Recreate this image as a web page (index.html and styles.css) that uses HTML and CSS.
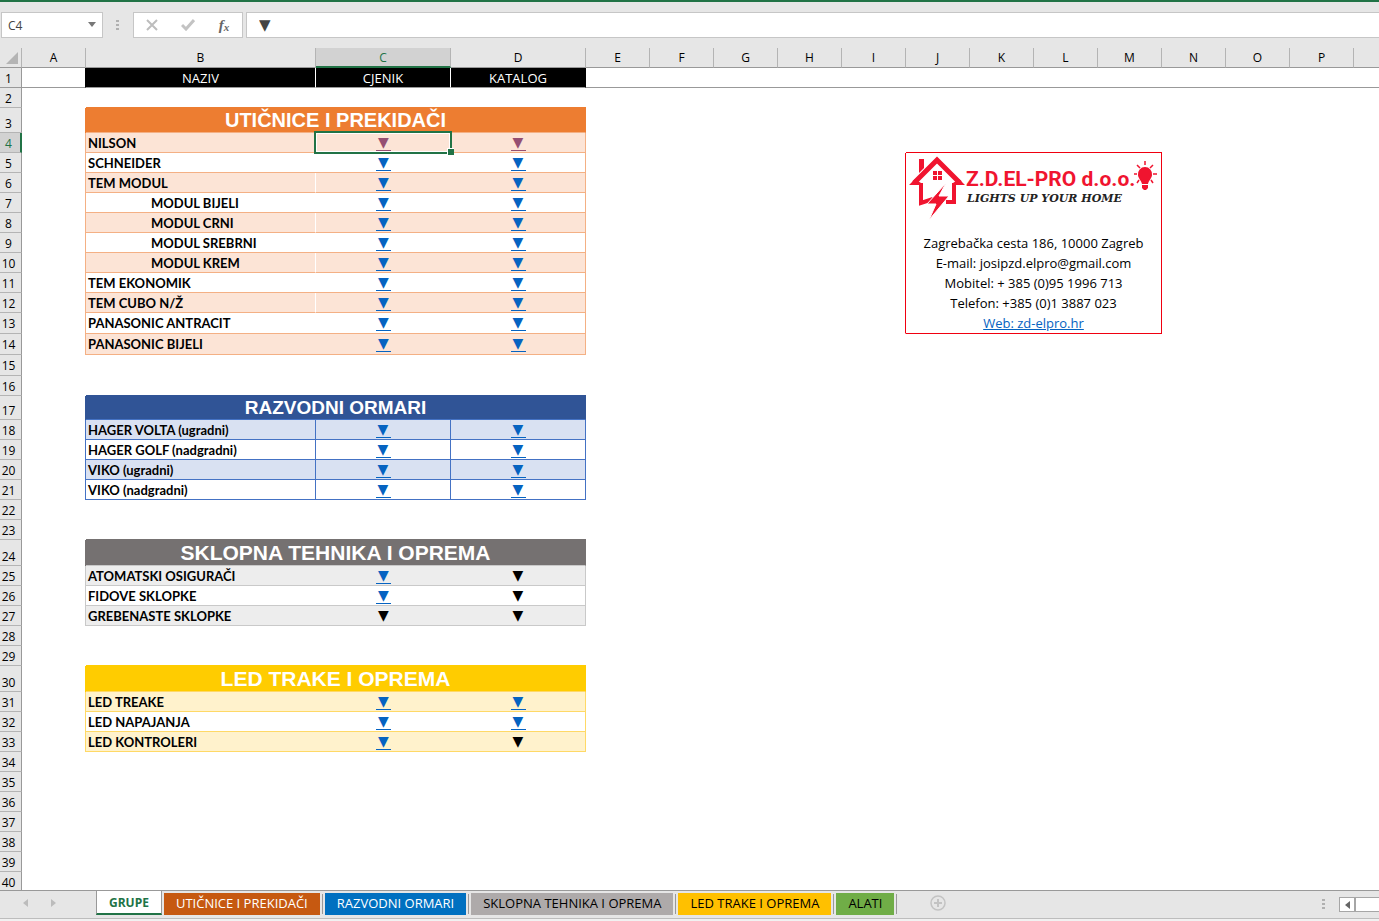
FILE: index.html
```html
<!DOCTYPE html>
<html lang="hr">
<head>
<meta charset="utf-8">
<title>GRUPE</title>
<link rel="stylesheet" href="styles.css">
</head>
<body>
<header class="formula-bar">
  <div class="name-box">
    <input type="text" value="C4" aria-label="Name box">
    <button type="button" aria-label="Open name list"><svg width="8" height="5" viewBox="0 0 8 5"><path d="M0 0h8L4 5z" fill="#777"/></svg></button>
  </div>
  <span class="grip"></span>
  <div class="actions">
    <button type="button" aria-label="Cancel"><svg width="14" height="12" viewBox="0 0 14 12"><path d="M2 1l10 10M12 1L2 11" stroke="#bdbdbd" stroke-width="2" fill="none"/></svg></button>
    <button type="button" aria-label="Enter"><svg width="14" height="12" viewBox="0 0 14 12"><path d="M1 6l4 4 8-9" stroke="#c3c3c3" stroke-width="3" fill="none"/></svg></button>
    <button type="button" class="fx" aria-label="Insert function">f<small>x</small></button>
  </div>
  <input class="formula" type="text" value="▼" aria-label="Formula">
</header>

<main class="sheet">
<table>
  <colgroup><col class="w-head"><col class="w-std"><col class="w-name"><col class="w-link"><col class="w-link"><col class="w-std"><col class="w-std"><col class="w-std"><col class="w-std"><col class="w-std"><col class="w-std"><col class="w-std"><col class="w-std"><col class="w-std"><col class="w-std"><col class="w-std"><col class="w-std"><col></colgroup>
  <thead>
    <tr><th class="corner"><svg width="12" height="12" viewBox="0 0 12 12"><path d="M12 0v12H0z" fill="#b4b4b4"/></svg></th><th>A</th><th>B</th><th class="current">C</th><th>D</th><th>E</th><th>F</th><th>G</th><th>H</th><th>I</th><th>J</th><th>K</th><th>L</th><th>M</th><th>N</th><th>O</th><th>P</th><th class="last"></th></tr>
  </thead>
  <tbody>
    <tr class="frozen"><th>1</th><td class="edge"></td><td class="label">NAZIV</td><td class="label">CJENIK</td><td class="label">KATALOG</td><td colspan="13" class="last"></td></tr>
    <tr><th>2</th><td></td><td colspan="3" class="over-orange"></td><td colspan="13"></td></tr>
    <tr class="orange h25"><th>3</th><td class="edge"></td><td colspan="3" class="title">UTIČNICE I PREKIDAČI</td><td colspan="13"></td></tr>
    <tr class="orange band"><th class="current">4</th><td class="edge"></td><td class="name">NILSON</td><td class="selected"><a class="visited" href="#c4">▼</a></td><td><a class="visited" href="#d4">▼</a></td><td colspan="5"></td><td colspan="4" class="over-info"></td><td colspan="4"></td></tr>
    <tr class="orange"><th>5</th><td class="edge"></td><td class="name">SCHNEIDER</td><td><a href="#c5">▼</a></td><td><a href="#d5">▼</a></td><td colspan="5" rowspan="9" class="before-info"></td>
      <td colspan="4" rowspan="9" class="info">
        <svg class="logo" viewBox="0 0 255 80" role="img" aria-label="Z.D.EL-PRO d.o.o.">
          <path d="M13 6h5v9l-5 5z" fill="#f0142f"/>
          <path d="M8 30L31 7l23 23" fill="none" stroke="#f0142f" stroke-width="5"/>
          <path d="M3 32l6-6 6 4v2zM59 32l-6-6-6 4v2z" fill="#f0142f"/>
          <path d="M15 30v20l12-4M48 30v19h-8" fill="none" stroke="#f0142f" stroke-width="4"/>
          <path d="M40 30L21 51h9L23 67l20-24H33z" fill="#f0142f" stroke="#fff" stroke-width="1"/>
          <path d="M27 18h4v4h-4zM32 18h4v4h-4zM27 23h4v4h-4zM32 23h4v4h-4z" fill="#f0142f"/>
          <text class="brand" x="60" y="33">Z.D.EL-PRO d.o.o.</text>
          <text class="tagline" x="61" y="49">LIGHTS UP YOUR HOME</text>
          <path d="M239 14a7 7 0 0 1 7 8c0 3-3 5-4 9h-6c-1-4-4-6-4-9a7 7 0 0 1 7-8zM236 32h6v3l-2 2h-2l-2-2z" fill="#f0142f"/>
          <path d="M239 8v4M231 12l3 3M247 12l-3 3M228 21h3M251 21h-4M231 30l2-3M247 30l-2-3" stroke="#f0142f" stroke-width="1.5"/>
        </svg>
        <p>Zagrebačka cesta 186, 10000 Zagreb</p>
        <p>E-mail: josipzd.elpro@gmail.com</p>
        <p>Mobitel: + 385 (0)95 1996 713</p>
        <p>Telefon: +385 (0)1 3887 023</p>
        <p><a href="#web">Web: zd-elpro.hr</a></p>
      </td><td colspan="4" rowspan="9"></td></tr>
    <tr class="orange band split"><th>6</th><td class="edge"></td><td class="name">TEM MODUL</td><td><a href="#c6">▼</a></td><td><a href="#d6">▼</a></td></tr>
    <tr class="orange"><th>7</th><td class="edge"></td><td class="name sub">MODUL BIJELI</td><td><a href="#c7">▼</a></td><td><a href="#d7">▼</a></td></tr>
    <tr class="orange band split"><th>8</th><td class="edge"></td><td class="name sub">MODUL CRNI</td><td><a href="#c8">▼</a></td><td><a href="#d8">▼</a></td></tr>
    <tr class="orange"><th>9</th><td class="edge"></td><td class="name sub">MODUL SREBRNI</td><td><a href="#c9">▼</a></td><td><a href="#d9">▼</a></td></tr>
    <tr class="orange band split"><th>10</th><td class="edge"></td><td class="name sub">MODUL KREM</td><td><a href="#c10">▼</a></td><td><a href="#d10">▼</a></td></tr>
    <tr class="orange"><th>11</th><td class="edge"></td><td class="name">TEM EKONOMIK</td><td><a href="#c11">▼</a></td><td><a href="#d11">▼</a></td></tr>
    <tr class="orange band split"><th>12</th><td class="edge"></td><td class="name">TEM CUBO N/Ž</td><td><a href="#c12">▼</a></td><td><a href="#d12">▼</a></td></tr>
    <tr class="orange h21"><th>13</th><td class="edge"></td><td class="name">PANASONIC ANTRACIT</td><td><a href="#c13">▼</a></td><td><a href="#d13">▼</a></td></tr>
    <tr class="orange band h21"><th>14</th><td class="edge"></td><td class="name">PANASONIC BIJELI</td><td><a href="#c14">▼</a></td><td><a href="#d14">▼</a></td><td colspan="13"></td></tr>
    <tr class="h21"><th>15</th><td colspan="17"></td></tr>
    <tr><th>16</th><td></td><td colspan="3" class="over-blue"></td><td colspan="13"></td></tr>
    <tr class="blue h24"><th>17</th><td class="edge"></td><td colspan="3" class="title">RAZVODNI ORMARI</td><td colspan="13"></td></tr>
    <tr class="blue band"><th>18</th><td class="edge"></td><td class="name">HAGER VOLTA (ugradni)</td><td><a href="#c18">▼</a></td><td><a href="#d18">▼</a></td><td colspan="13"></td></tr>
    <tr class="blue"><th>19</th><td class="edge"></td><td class="name">HAGER GOLF (nadgradni)</td><td><a href="#c19">▼</a></td><td><a href="#d19">▼</a></td><td colspan="13"></td></tr>
    <tr class="blue band"><th>20</th><td class="edge"></td><td class="name">VIKO (ugradni)</td><td><a href="#c20">▼</a></td><td><a href="#d20">▼</a></td><td colspan="13"></td></tr>
    <tr class="blue"><th>21</th><td class="edge"></td><td class="name">VIKO (nadgradni)</td><td><a href="#c21">▼</a></td><td><a href="#d21">▼</a></td><td colspan="13"></td></tr>
    <tr><th>22</th><td colspan="17"></td></tr>
    <tr><th>23</th><td></td><td colspan="3" class="over-gray"></td><td colspan="13"></td></tr>
    <tr class="gray h26"><th>24</th><td class="edge"></td><td colspan="3" class="title">SKLOPNA TEHNIKA I OPREMA</td><td colspan="13"></td></tr>
    <tr class="gray band"><th>25</th><td class="edge"></td><td class="name">ATOMATSKI OSIGURAČI</td><td><a href="#c25">▼</a></td><td><span class="mark">▼</span></td><td colspan="13"></td></tr>
    <tr class="gray"><th>26</th><td class="edge"></td><td class="name">FIDOVE SKLOPKE</td><td><a href="#c26">▼</a></td><td><span class="mark">▼</span></td><td colspan="13"></td></tr>
    <tr class="gray band"><th>27</th><td class="edge"></td><td class="name">GREBENASTE SKLOPKE</td><td><span class="mark">▼</span></td><td><span class="mark">▼</span></td><td colspan="13"></td></tr>
    <tr><th>28</th><td colspan="17"></td></tr>
    <tr><th>29</th><td></td><td colspan="3" class="over-yellow"></td><td colspan="13"></td></tr>
    <tr class="yellow h26"><th>30</th><td class="edge"></td><td colspan="3" class="title">LED TRAKE I OPREMA</td><td colspan="13"></td></tr>
    <tr class="yellow band"><th>31</th><td class="edge"></td><td class="name">LED TREAKE</td><td><a href="#c31">▼</a></td><td><a href="#d31">▼</a></td><td colspan="13"></td></tr>
    <tr class="yellow"><th>32</th><td class="edge"></td><td class="name">LED NAPAJANJA</td><td><a href="#c32">▼</a></td><td><a href="#d32">▼</a></td><td colspan="13"></td></tr>
    <tr class="yellow band"><th>33</th><td class="edge"></td><td class="name">LED KONTROLERI</td><td><a href="#c33">▼</a></td><td><span class="mark">▼</span></td><td colspan="13"></td></tr>
    <tr><th>34</th><td colspan="17"></td></tr>
    <tr><th>35</th><td colspan="17"></td></tr>
    <tr><th>36</th><td colspan="17"></td></tr>
    <tr><th>37</th><td colspan="17"></td></tr>
    <tr><th>38</th><td colspan="17"></td></tr>
    <tr><th>39</th><td colspan="17"></td></tr>
    <tr><th>40</th><td colspan="17"></td></tr>
  </tbody>
</table>
</main>

<footer class="tab-bar">
  <div class="tab-nav">
    <button type="button" aria-label="Previous sheets"><svg width="5" height="8" viewBox="0 0 5 8"><path d="M5 0v8L0 4z" fill="#bcbcbc"/></svg></button>
    <button type="button" aria-label="Next sheets"><svg width="5" height="8" viewBox="0 0 5 8"><path d="M0 0v8l5-4z" fill="#bcbcbc"/></svg></button>
  </div>
  <nav class="tabs">
    <button type="button" class="tab active">GRUPE</button>
    <button type="button" class="tab t-orange">UTIČNICE I PREKIDAČI</button>
    <button type="button" class="tab t-blue">RAZVODNI ORMARI</button>
    <button type="button" class="tab t-gray">SKLOPNA TEHNIKA I OPREMA</button>
    <button type="button" class="tab t-yellow">LED TRAKE I OPREMA</button>
    <button type="button" class="tab t-green">ALATI</button>
  </nav>
  <button type="button" class="add" aria-label="New sheet"><svg width="16" height="16" viewBox="0 0 16 16"><circle cx="8" cy="8" r="7" fill="none" stroke="#c3c3c3" stroke-width="1.5"/><path d="M8 4v8M4 8h8" stroke="#c3c3c3" stroke-width="2"/></svg></button>
  <span class="grip"></span>
  <div class="scroller"><button type="button" aria-label="Scroll left"><svg width="5" height="8" viewBox="0 0 5 8"><path d="M5 0v8L0 4z" fill="#666"/></svg></button><span class="thumb"></span></div>
</footer>
</body>
</html>
```
FILE: styles.css
```css
* { box-sizing: border-box; }

body {
  margin: 0;
  height: 100vh;
  display: flex;
  flex-direction: column;
  overflow: hidden;
  background: #e6e6e6;
  color: #000;
  font: 13px/18px "Open Sans", "Noto Sans", sans-serif;
}

button, input {
  margin: 0;
  padding: 0;
  border: 0;
  background: none;
  color: inherit;
  font: inherit;
}

button { display: flex; align-items: center; justify-content: center; }

/* Formula bar */
.formula-bar {
  flex: none;
  display: flex;
  height: 48px;
  padding: 10px 0 10px 1px;
  border-top: 2px solid #217346;
}

.name-box, .actions, .formula {
  height: 26px;
  border: 1px solid #c6c6c6;
  background: #fff;
}

.name-box { display: flex; width: 102px; }
.name-box input { flex: 1; min-width: 0; padding: 2px 0 0 6px; color: #444; font-size: 12px; }
.name-box button { width: 20px; padding-bottom: 2px; }

.grip {
  width: 3px;
  height: 11px;
  margin: 8px 14px 0 13px;
  background: repeating-linear-gradient(#b0b0b0 0 2px, transparent 2px 4px);
}

.actions { display: flex; width: 110px; }
.actions button { flex: 1; }
.actions .fx { color: #666; font: italic bold 15px/18px "Liberation Serif", serif; }
.fx small { padding-top: 4px; font-size: 11px; }

.formula {
  flex: 1;
  min-width: 0;
  margin-left: 3px;
  padding-left: 12px;
  border-right: 0;
  color: #444;
  font: 15px/18px "DejaVu Sans", sans-serif;
}

/* Grid */
.sheet { flex: 1; min-height: 0; overflow: hidden; background: #fff; }

table { width: 100%; table-layout: fixed; border-collapse: separate; border-spacing: 0; }
.w-head { width: 22px; }
.w-std { width: 64px; }
.w-name { width: 230px; }
.w-link { width: 135px; }

tr { height: 20px; }
.h21 { height: 21px; }
.h24 { height: 24px; }
.h25 { height: 25px; }
.h26 { height: 26px; }

th, td {
  padding: 0;
  border: 0 solid transparent;
  border-width: 0 1px 1px 0;
  font-weight: 400;
  line-height: 18px;
  text-align: center;
  vertical-align: bottom;
  white-space: nowrap;
}
.h21 > * { padding-bottom: 1px; }

th { background: #e6e6e6; font-size: 12px; }
thead th { border-right-color: #b4b4b4; border-bottom-color: #999; }
tbody th { border-right-color: #999; border-bottom-color: #b4b4b4; padding-right: 4px; line-height: 16px; }
.corner svg { display: block; margin: 0 0 3px 6px; }
thead .current { background: #d2d2d2; border-bottom: 2px solid #217346; color: #217346; line-height: 17px; }
tbody .current { background: #d2d2d2; border-right: 2px solid #217346; color: #217346; padding-right: 3px; }
.last { border-right-width: 0; }

.frozen th, .frozen td { border-bottom-color: #999; }
.frozen .label { background: #000; border-right-color: #fff; color: #fff; line-height: 17px; }
.frozen .edge, .frozen .label:nth-child(5) { border-right-color: #000; }

.title {
  color: #fff;
  font: bold 20px/22px "Liberation Sans", Arial, sans-serif;
  vertical-align: middle;
}
.blue .title { font-size: 19px; }
.gray .title, .yellow .title { font-size: 21px; }

.name { padding-left: 2px; font: bold 13px/18px Lato, sans-serif; text-align: left; }
.sub { padding-left: 65px; }

td > a, .mark {
  display: block;
  width: 15px;
  height: 16px;
  margin: 0 auto 1px;
  border-bottom: 1px solid #0563c1;
  color: #0563c1;
  font: 14px/15px "DejaVu Sans", sans-serif;
  text-align: center;
  text-decoration: none;
}
td > .visited { border-color: #954f72; color: #954f72; }
.mark { border-color: transparent; color: #000; }

.over-orange { border-bottom-color: #ed7d31; }
.over-blue { border-bottom-color: #305496; }
.over-gray { border-bottom-color: #757171; }
.over-yellow { border-bottom-color: #ffcc00; }
[class^="over-"] { border-right-width: 0; }

/* Tables without inner column lines */
.orange .name, .orange .name + td,
.gray .name, .gray .name + td,
.yellow .name, .yellow .name + td { border-right-width: 0; }

.orange .edge, .orange .name ~ td:nth-child(5) { border-right-color: #f4b084; }
.orange .name, .orange .name ~ td:nth-child(-n+5), .orange .title { border-bottom-color: #f4b084; }
.orange.band .name, .orange.band .name ~ td:nth-child(-n+5) { background: #fce4d6; }
.orange.split .name { border-right: 1px solid #fff; }
.orange .title { background: #ed7d31; border-right-color: #ed7d31; }

.blue .edge, .blue .name, .blue .name ~ td:nth-child(-n+5) { border-right-color: #4472c4; }
.blue .name, .blue .name ~ td:nth-child(-n+5), .blue .title { border-bottom-color: #4472c4; }
.blue.band .name, .blue.band .name ~ td:nth-child(-n+5) { background: #d9e1f2; }
.blue .title { background: #305496; border-right-color: #305496; }

.gray .edge, .gray .name ~ td:nth-child(5) { border-right-color: #c9c9c9; }
.gray .name, .gray .name ~ td:nth-child(-n+5), .gray .title { border-bottom-color: #c9c9c9; }
.gray.band .name, .gray.band .name ~ td:nth-child(-n+5) { background: #ededed; }
.gray .title { background: #757171; border-right-color: #757171; }

.yellow .edge, .yellow .name ~ td:nth-child(5) { border-right-color: #ffd966; }
.yellow .name, .yellow .name ~ td:nth-child(-n+5), .yellow .title { border-bottom-color: #ffd966; }
.yellow.band .name, .yellow.band .name ~ td:nth-child(-n+5) { background: #fff2cc; }
.yellow .title { background: #ffcc00; border-right-color: #ffcc00; }

/* Edge cells meet the coloured block with no gap at the corner */
.edge { border-bottom-width: 0; }
.frozen .edge { border-bottom-width: 1px; }
.orange.h25 .edge { border-right-color: #ed7d31; }
.blue.h24 .edge { border-right-color: #305496; }
.gray.h26 .edge { border-right-color: #757171; }
.yellow.h26 .edge { border-right-color: #ffcc00; }

/* Cell selection frame and its fill handle */
.selected { position: relative; }
.selected::before {
  content: "";
  position: absolute;
  inset: -2px -1px -2px -2px;
  border: 2px solid #217346;
  box-shadow: inset 0 0 0 1px #fff;
}
.selected::after {
  content: "";
  position: absolute;
  right: -3px;
  bottom: -3px;
  width: 6px;
  height: 6px;
  border: 1px solid #fff;
  border-width: 1px 0 0 1px;
  background: #217346;
}

/* Company card */
.orange .over-info { border-bottom-color: #f00010; }
.before-info { border-right-color: #f00010; }
.orange .info { border-right-color: #f00010; border-bottom-color: #f00010; }
.info { font: 13px/20px "Open Sans", "Noto Sans", sans-serif; vertical-align: top; }
.info p { margin: 0; line-height: 20px; }
.info p a { color: #0563c1; }
.logo { display: block; width: 100%; height: 80px; }
.brand { fill: #f0142f; font: bold 21px Roboto, "Liberation Sans", sans-serif; }
.tagline { fill: #222; font: italic bold 11px "DejaVu Serif", serif; }

/* Sheet tabs */
.tab-bar {
  flex: none;
  display: flex;
  height: 31px;
  padding-bottom: 2px;
  border-top: 1px solid #999;
  border-bottom: 2px solid #f1f1f1;
  box-shadow: inset 0 -1px #bdbdbd;
}
.tab-nav { display: flex; gap: 23px; width: 96px; padding: 0 0 3px 23px; }
.tabs { display: flex; align-items: flex-start; }
.tab {
  position: relative;
  height: 22px;
  margin: 2px 5px 0 0;
  padding: 0 12px 2px;
  white-space: nowrap;
}
.tab:not(.active)::after {
  content: "";
  position: absolute;
  top: 1px;
  right: -3px;
  width: 1px;
  height: 20px;
  background: #999;
}
.active {
  height: 24px;
  margin: 0 2px 0 0;
  padding: 2px 12px 0;
  border: 1px solid #999;
  border-width: 0 1px;
  border-bottom: 2px solid #217346;
  background: #fff;
  color: #217346;
  font-size: 12px;
  font-weight: 700;
}
.t-orange { background: #c65911; color: #fff; }
.t-blue { background: #0070c0; color: #fff; }
.t-gray { background: #aeaaaa; }
.t-yellow { background: #ffc000; }
.t-green { background: #70ad47; }
.add { width: 16px; margin-left: 31px; padding-bottom: 2px; }
.tab-bar .grip { margin-left: auto; }
.scroller { display: flex; width: 40px; height: 15px; margin-top: 6px; border: 1px solid #a6a6a6; border-right: 0; background: #fff; }
.scroller button { width: 14px; }
.thumb { flex: 1; border-left: 2px solid #a6a6a6; }
```
